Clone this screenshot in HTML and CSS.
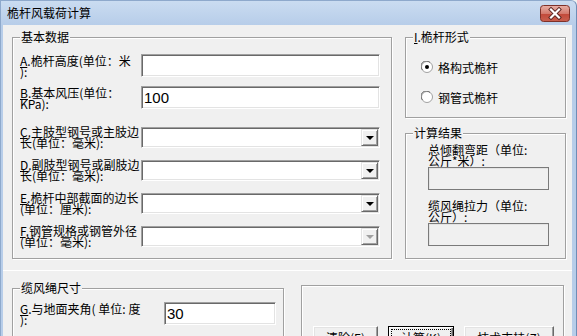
FILE: index.html
```html
<!DOCTYPE html>
<html lang="zh-CN">
<head>
    <meta charset="UTF-8">
    <title>桅杆风载荷计算</title>
    <link rel="stylesheet" href="styles.css">
</head>
<body>
    <div class="window">
        <div class="titlebar">
            <span class="title">桅杆风载荷计算</span>
            <span class="close-btn">
                <svg width="30" height="17" viewBox="0 0 30 17">
                    <defs>
                        <linearGradient id="closeFill" x1="0" y1="0" x2="0" y2="1">
                            <stop offset="0" stop-color="#e8b1a8"/>
                            <stop offset="0.5" stop-color="#d47a6d"/>
                            <stop offset="0.55" stop-color="#c24a3b"/>
                            <stop offset="1" stop-color="#c9604f"/>
                        </linearGradient>
                    </defs>
                    <rect x="0.5" y="0.5" width="29" height="16" rx="3" fill="url(#closeFill)" stroke="#7e3129"/>
                    <path d="M11 4.5 L19 12.5 M19 4.5 L11 12.5" stroke="#5a2420" stroke-width="4" stroke-linecap="square"/>
                    <path d="M11 4.5 L19 12.5 M19 4.5 L11 12.5" stroke="#fff" stroke-width="2.2" stroke-linecap="square"/>
                </svg>
            </span>
        </div>
        <div class="frame">
            <div class="client">
                <div class="top">
                    <fieldset class="group basic">
                        <legend>基本数据</legend>
                        <div class="field row-a">
                            <label><u>A</u>.桅杆高度(单位：米<br>):</label>
                            <input class="edit" type="text" value="">
                        </div>
                        <div class="field row-b">
                            <label><u>B</u>.基本风压(单位：<br>KPa):</label>
                            <input class="edit" type="text" value="100">
                        </div>
                        <div class="field row-combo">
                            <label><u>C</u>.主肢型钢号或主肢边<br>长(单位：毫米):</label>
                            <div class="combo"><span class="drop"><i class="arrow"></i></span></div>
                        </div>
                        <div class="field row-combo">
                            <label><u>D</u>.副肢型钢号或副肢边<br>长(单位：毫米):</label>
                            <div class="combo"><span class="drop"><i class="arrow"></i></span></div>
                        </div>
                        <div class="field row-combo">
                            <label><u>E</u>.桅杆中部截面的边长<br>(单位：厘米):</label>
                            <div class="combo"><span class="drop"><i class="arrow"></i></span></div>
                        </div>
                        <div class="field row-combo last">
                            <label><u>F</u>.钢管规格或钢管外径<br>(单位：毫米):</label>
                            <div class="combo disabled"><span class="drop"><i class="arrow"></i></span></div>
                        </div>
                    </fieldset>

                    <div class="side">
                        <fieldset class="group mast-type">
                            <legend><u>I</u>.桅杆形式</legend>
                            <div class="radio">
                                <svg width="12" height="12" viewBox="0 0 12 12">
                                    <circle cx="6" cy="6" r="5.5" fill="#fff" stroke="#a0a0a0"/>
                                    <path d="M1.5 9 A5 5 0 0 1 9 1.5" fill="none" stroke="#696969"/>
                                    <circle cx="6" cy="6" r="2" fill="#000"/>
                                </svg>
                                <span>格构式桅杆</span>
                            </div>
                            <div class="radio second">
                                <svg width="12" height="12" viewBox="0 0 12 12">
                                    <circle cx="6" cy="6" r="5.5" fill="#fff" stroke="#a0a0a0"/>
                                    <path d="M1.5 9 A5 5 0 0 1 9 1.5" fill="none" stroke="#696969"/>
                                </svg>
                                <span>钢管式桅杆</span>
                            </div>
                        </fieldset>

                        <fieldset class="group result">
                            <legend>计算结果</legend>
                            <div class="result-label">总倾翻弯距（单位:<br>公斤*米）:</div>
                            <div class="result-box"></div>
                            <div class="result-label next">缆风绳拉力（单位:<br>公斤）:</div>
                            <div class="result-box"></div>
                        </fieldset>
                    </div>
                </div>

                <div class="sep"></div>

                <div class="bottom">
                    <fieldset class="group rope">
                        <legend>缆风绳尺寸</legend>
                        <div class="field">
                            <label class="wide"><u>G</u>.与地面夹角( 单位: 度<br>):</label>
                            <input class="edit short" type="text" value="30">
                        </div>
                    </fieldset>

                    <div class="group actions">
                        <button class="btn w-clear">清除(<u>E</u>)</button>
                        <button class="btn default w-calc"><span class="focus">计算(<u>K</u>)</span></button>
                        <button class="btn w-help">技术支持(<u>Z</u>)</button>
                    </div>
                </div>
            </div>
        </div>
    </div>
</body>
</html>
```

FILE: styles.css
```css
* {
    box-sizing: border-box;
}

body {
    margin: 0;
    font-family: "Noto Sans CJK SC", "Liberation Sans", sans-serif;
    font-size: 12px;
    color: #000;
    background: #f0f0f0;
}

.window {
    width: 577px;
    height: 336px;
    overflow: hidden;
    display: flex;
    flex-direction: column;
}

.titlebar {
    height: 25px;
    flex: none;
    display: flex;
    align-items: center;
    justify-content: space-between;
    padding: 0 6px 0 6px;
    background: linear-gradient(#cadcf1, #b7cde9);
    border-top: 1px solid #8ea9cc;
    border-left: 1px solid #8ea9cc;
    border-right: 1px solid #6f8db6;
    border-top-right-radius: 6px;
}

.title {
    line-height: 14px;
}

.close-btn {
    display: flex;
    margin-top: 1px;
}

.frame {
    flex: 1;
    display: flex;
    padding: 0 4px 0 2px;
    background: #b7cde9;
    border-left: 1px solid #8ea9cc;
    border-right: 1px solid #6f8db6;
}

.client {
    flex: 1;
    background: #f0f0f0;
    padding: 5px 0 0 9px;
}

.top {
    display: flex;
    gap: 13px;
}

/* group boxes */
.group {
    margin: 0;
    min-width: 0;
    border: 1px solid #a0a0a0;
    box-shadow: inset 1px 1px 0 #fff, 1px 1px 0 #fff;
}

.group legend {
    padding: 0 1px;
    line-height: 14px;
    background: #f0f0f0;
}

.basic {
    width: 380px;
    height: 229px;
    padding: 10px 10px 0 7px;
}

.field {
    display: flex;
    align-items: center;
}

.field label {
    width: 121px;
    flex: none;
    line-height: 11px;
    white-space: nowrap;
}

.field label.wide {
    width: 144px;
}

.row-a {
    margin-bottom: 9px;
}

.row-b {
    margin-bottom: 17px;
}

.row-combo {
    margin-bottom: 11px;
}

.row-combo.last {
    margin-bottom: 0;
}

/* sunken edit */
.edit {
    width: 239px;
    height: 23px;
    margin: 0;
    padding: 0 2px;
    font-family: "Liberation Sans", Arial, sans-serif;
    font-size: 15px;
    color: #000;
    background: #fff;
    border: 1px solid;
    border-color: #a0a0a0 #fff #fff #a0a0a0;
    box-shadow: inset 1px 1px 0 #696969, inset -1px -1px 0 #e3e3e3;
    outline: none;
}

.edit.short {
    width: 112px;
}

.combo {
    width: 239px;
    height: 21px;
    display: flex;
    justify-content: flex-end;
    padding: 1px;
    background: #fff;
    border: 1px solid;
    border-color: #a0a0a0 #fff #fff #a0a0a0;
    box-shadow: inset 1px 1px 0 #696969, inset -1px -1px 0 #e3e3e3;
}

.drop {
    width: 17px;
    display: flex;
    align-items: center;
    justify-content: center;
    background: #f0f0f0;
    border: 1px solid;
    border-color: #e3e3e3 #696969 #696969 #e3e3e3;
    box-shadow: inset 1px 1px 0 #fff, inset -1px -1px 0 #a0a0a0;
}

.arrow {
    width: 0;
    height: 0;
    border-top: 4px solid #000;
    border-left: 4px solid transparent;
    border-right: 4px solid transparent;
    margin-top: 1px;
}

.combo.disabled .arrow {
    border-top-color: #a0a0a0;
}

/* right column */
.side {
    width: 161px;
    display: flex;
    flex-direction: column;
}

.mast-type {
    height: 88px;
    padding: 15px 7px 0 7px;
}

.radio {
    display: flex;
    align-items: center;
    gap: 5px;
    height: 16px;
    margin-left: 8px;
}

.radio svg {
    display: block;
}

.radio.second {
    margin-top: 14px;
}

.result {
    height: 133px;
    margin-top: 8px;
    padding: 4px 7px 0 7px;
}

.result-label {
    margin-left: 15px;
    line-height: 11px;
    white-space: nowrap;
}

.result-label.next {
    margin-top: 10px;
}

.result-box {
    width: 121px;
    height: 23px;
    margin: 1px 0 0 15px;
    border: 1px solid #7a7a7a;
    box-shadow: inset 1px 1px 0 #e3e3e3;
}

.sep {
    height: 1px;
    margin: 11px 0 0 -9px;
    background: #fff;
}

/* bottom row */
.bottom {
    display: flex;
    align-items: flex-start;
    gap: 17px;
    margin-top: 10px;
}

.rope {
    width: 272px;
    height: 70px;
    padding: 7px 6px 0 7px;
}

.actions {
    width: 263px;
    height: 70px;
    margin-top: 4px;
    display: flex;
    gap: 10px;
    padding: 40px 0 0 11px;
}

.btn {
    height: 23px;
    padding: 0;
    font-family: "Noto Sans CJK SC", sans-serif;
    font-size: 12px;
    color: #000;
    background: #f0f0f0;
    border: 1px solid;
    border-color: #fff #696969 #696969 #fff;
    box-shadow: inset -1px -1px 0 #a0a0a0, inset 1px 1px 0 #e3e3e3;
}

.btn.default {
    border: 1px solid #000;
    box-shadow: inset 1px 1px 0 #fff, inset -1px -1px 0 #696969, inset -2px -2px 0 #a0a0a0;
    padding: 3px;
}

.btn .focus {
    display: block;
    height: 100%;
    line-height: 15px;
    outline: 1px dotted #000;
}

.w-clear {
    width: 65px;
}

.w-calc {
    width: 66px;
}

.w-help {
    width: 90px;
}
```
